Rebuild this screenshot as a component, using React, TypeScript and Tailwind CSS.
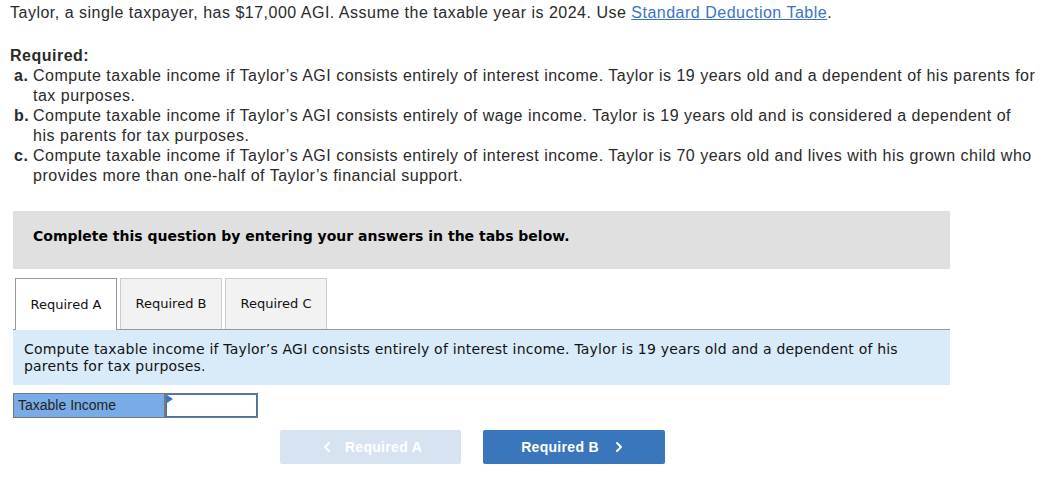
import { ChevronLeft, ChevronRight } from "lucide-react";

const parts = [
  {
    key: "a.",
    text: "Compute taxable income if Taylor’s AGI consists entirely of interest income. Taylor is 19 years old and a dependent of his parents for tax purposes.",
  },
  {
    key: "b.",
    text: "Compute taxable income if Taylor’s AGI consists entirely of wage income. Taylor is 19 years old and is considered a dependent of his parents for tax purposes.",
  },
  {
    key: "c.",
    text: "Compute taxable income if Taylor’s AGI consists entirely of interest income. Taylor is 70 years old and lives with his grown child who provides more than one-half of Taylor’s financial support.",
  },
];

const tabs = ["Required A", "Required B", "Required C"];

export default function App() {
  return (
    <div className="w-[1049px] h-[488px] bg-white overflow-hidden">
      <div className="pl-[10px] pr-[12px] pt-[3px] font-['Liberation_Sans',sans-serif] text-[16px] leading-[20px] tracking-[0.5px] text-[#2a2a2a]">
        <p>
          Taylor, a single taxpayer, has $17,000 AGI. Assume the taxable year is 2024. Use{" "}
          <a className="text-[#3b74c4] underline">Standard Deduction Table</a>.
        </p>
        <p className="mt-[23px] font-bold">Required:</p>
        <ul>
          {parts.map((p) => (
            <li key={p.key} className="flex">
              <span className="w-[23px] shrink-0 pl-[4px] font-bold">{p.key}</span>
              <span>{p.text}</span>
            </li>
          ))}
        </ul>
      </div>

      <div className="ml-[13px] w-[937px] mt-[25px] font-['DejaVu_Sans',Verdana,sans-serif]">
        <div className="h-[58px] bg-[#e0e0e0] px-[20px] pt-[17px] text-[14px] leading-[17px] font-bold text-black">
          Complete this question by entering your answers in the tabs below.
        </div>

        <div className="mt-[9px] flex gap-[3px] pl-[2px] border-b border-[#999] h-[52px] items-end">
          {tabs.map((t, i) => (
            <div
              key={t}
              className={
                i === 0
                  ? "h-[52px] w-[102px] -mb-px bg-white border border-b-0 border-[#999] flex items-center justify-center text-[13px] text-[#111]"
                  : "h-[51px] w-[102px] bg-[#f2f2f2] border border-b-0 border-[#ccc] flex items-center justify-center text-[13px] text-[#111]"
              }
            >
              {t}
            </div>
          ))}
        </div>

        <div className="h-[55px] bg-[#d9ebf9] px-[11px] pt-[11px] text-[14px] leading-[17px] tracking-[0.2px] text-[#111]">
          Compute taxable income if Taylor’s AGI consists entirely of interest income. Taylor is 19 years old and a dependent of his parents for tax purposes.
        </div>

        <div className="mt-[8px] flex h-[25px]">
          <div className="w-[152px] bg-[#79ace6] border border-[#777] flex items-center pl-[4px] text-[14px] text-[#222] font-['Liberation_Sans',sans-serif]">
            Taxable Income
          </div>
          <div className="relative w-[93px] border border-[#777] bg-white">
            <div className="absolute inset-0 border border-[#3b74c4]" />
            <div className="absolute top-[1px] left-[1px] w-0 h-0 border-t-[4px] border-b-[4px] border-l-[6px] border-t-transparent border-b-transparent border-l-[#3b74c4]" />
          </div>
        </div>

        <div className="mt-[12px] flex gap-[22px] pl-[267px] font-['Liberation_Sans',sans-serif]">
          <button className="w-[181px] h-[34px] rounded-[2px] bg-[#d8e3f1] text-white font-bold text-[14px] tracking-[0.3px] flex items-center justify-center gap-[10px]">
            <ChevronLeft size={16} strokeWidth={3} />
            Required A
          </button>
          <button className="w-[182px] h-[34px] rounded-[2px] bg-[#3a76bb] text-white font-bold text-[14px] tracking-[0.3px] flex items-center justify-center gap-[12px]">
            Required B
            <ChevronRight size={16} strokeWidth={3} />
          </button>
        </div>
      </div>
    </div>
  );
}
